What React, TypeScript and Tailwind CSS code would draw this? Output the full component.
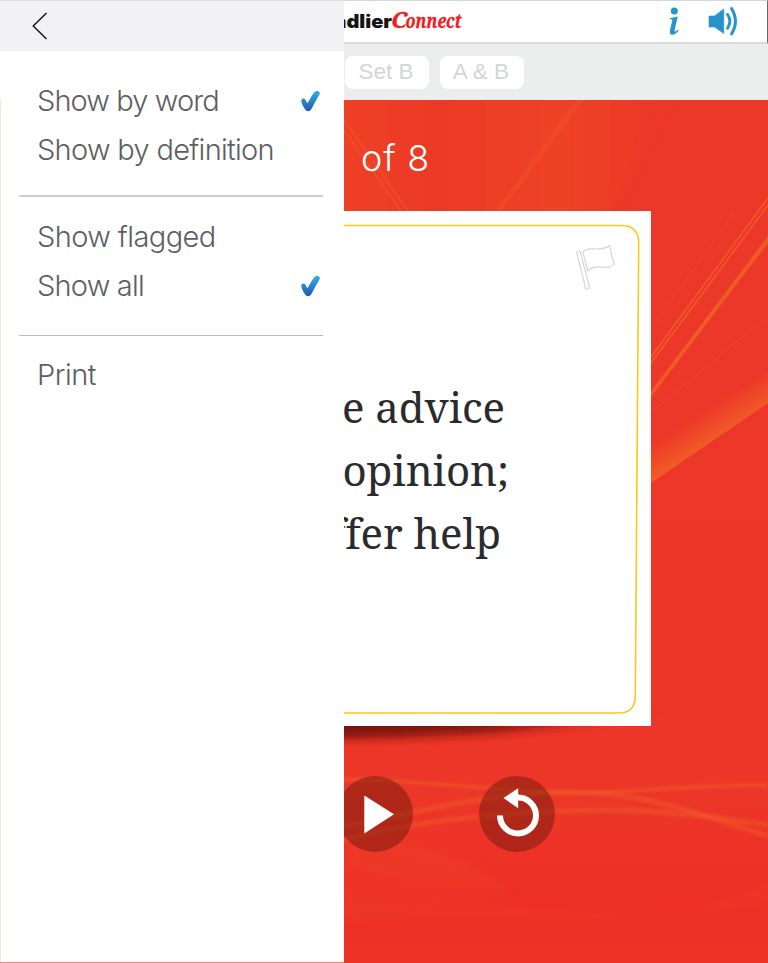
import React from "react";

function CheckMark() {
  return (
    <svg width="21" height="23" viewBox="0 0 21 23">
      <defs>
        <linearGradient id="check" x1="0" y1="0" x2="0" y2="1">
          <stop offset="0" stopColor="#2bb0e6" />
          <stop offset="0.5" stopColor="#2b86cc" />
          <stop offset="1" stopColor="#2356ae" />
        </linearGradient>
      </defs>
      <path
        d="M1.3 11.2C1 9.3 2.3 8.3 3.8 8.5C5.2 8.7 5.9 11 7.4 13.2C9.5 9.8 12 5 14.6 1.9C16.2.4 19 .9 19.8 2.6C20.2 3.7 19.2 5 18 6.9C15.5 11.1 13.4 15.5 11.2 19.2C9.9 21.7 6.8 21.8 5.4 19.8C3.6 17.3 1.9 14.2 1.3 11.2Z"
        fill="url(#check)"
      />
    </svg>
  );
}

function MenuRow({ label, checked, tracking }: { label: string; checked?: boolean; tracking: string }) {
  return (
    <div className="flex h-[49px] items-center justify-between pl-[37px] pr-[23px]">
      <span className={`whitespace-nowrap pb-px text-[29px] leading-[48px] ${tracking}`}>{label}</span>
      {checked && (
        <div className="pb-px">
          <CheckMark />
        </div>
      )}
    </div>
  );
}

function SidePanel() {
  return (
    <aside className="flex w-[344px] shrink-0 flex-col border-b border-[#f58a72] bg-white font-['Inter',sans-serif] font-light text-[#5e5e62]">
      <div className="flex h-[51px] shrink-0 items-center border-t border-[#dedee0] bg-[#f2f2f4] pl-8">
        <svg width="16" height="28" viewBox="0 0 16 28" fill="none" stroke="#111" strokeWidth="1.4">
          <path d="M14.5 1L1.2 14L14.5 27" />
        </svg>
      </div>
      <div className="h-[49px] shrink-0 pt-[26px]">
        <MenuRow label="Show by word" checked tracking="tracking-[-0.9px]" />
      </div>
      <div className="flex-1 border-l border-[#fbe3d9] pt-[26px]">
        <div className="-ml-px">
          <MenuRow label="Show by definition" tracking="tracking-[-0.7px]" />
          <div className="ml-[19px] mr-[21px] mt-[20px] h-[2px] bg-[#cfcfd1]" />
          <div className="pt-[16px]">
            <MenuRow label="Show flagged" tracking="tracking-[-0.6px]" />
            <MenuRow label="Show all" checked tracking="tracking-[-0.8px]" />
          </div>
          <div className="ml-[19px] mr-[21px] mt-[24px] h-px bg-[#bdbdbf]" />
          <div className="pt-[15px]">
            <MenuRow label="Print" tracking="tracking-[-0.5px]" />
          </div>
        </div>
      </div>
    </aside>
  );
}

function Header() {
  return (
    <header className="flex h-[44px] shrink-0 items-start border-b-2 border-t border-b-[#d9dadb] border-t-[#d5d6d8] border-r border-r-[#66686b] bg-white">
      <svg width="118" height="40" viewBox="344 1 118 40" className="shrink-0">
        <text x="334.5" y="28" textLength="57.5" lengthAdjust="spacingAndGlyphs" fontFamily="Inter, sans-serif" fontWeight="900" fontSize="18.5" fill="#151515">
          adlier
        </text>
        <g fontFamily="'Noto Serif', serif" fontWeight="700" fill="#ee1c23" stroke="#ee1c23" strokeWidth=".3">
          <text x="391" y="28" textLength="16" lengthAdjust="spacingAndGlyphs" fontStyle="italic" fontSize="21.5">
            C
          </text>
          <text x="405.5" y="28" textLength="56" lengthAdjust="spacingAndGlyphs" fontStyle="italic" fontSize="19">
            onnect
          </text>
        </g>
      </svg>
      <svg className="ml-[205px] mt-[5px]" width="16" height="32" viewBox="667 6 16 32">
        <circle cx="674.3" cy="11" r="3.5" fill="#2793cc" />
        <path d="M669.8 18.2L677.8 16.4L674.6 30.3C674.2 32.1 675.3 32 678 29.4L678.6 30.2C675.6 35.4 668.6 37 670 30.3L672.3 20.6C672.6 19.3 671.6 19.2 669.6 19.3Z" fill="#2793cc" />
      </svg>
      <svg className="ml-[25px] mt-[5px]" width="32" height="32" viewBox="708 6 32 32">
        <path d="M709 16H714.5L723.8 9V33.5L714.5 27H709Z" fill="#2793cc" stroke="#2793cc" strokeWidth=".6" strokeLinejoin="round" />
        <path d="M727.6 14.5Q732.2 21.3 727.6 28.3M731.6 8.5Q739.4 21.3 731.6 34" fill="none" stroke="#2793cc" strokeWidth="2.9" strokeLinecap="round" />
      </svg>
    </header>
  );
}

function SetTab({ label }: { label: string }) {
  return (
    <div className="flex h-[33px] w-[84px] items-center justify-center whitespace-pre rounded-[8px] bg-white pr-[2px] font-['Liberation_Sans',Arial,sans-serif] text-[22.5px] text-[#d3d5d7]">
      {label}
    </div>
  );
}

function Backdrop() {
  return (
    <svg className="absolute inset-0" width="424" height="863" viewBox="344 100 424 863">
      <defs>
        <linearGradient id="base" x1="0" y1="0" x2="0" y2="1">
          <stop offset="0" stopColor="#ec3828" />
          <stop offset="0.8" stopColor="#ec3728" />
          <stop offset="0.92" stopColor="#ed2f27" />
          <stop offset="1" stopColor="#ee3226" />
        </linearGradient>
        <linearGradient id="glow" x1="0" y1="0" x2="1" y2="0">
          <stop offset="0" stopColor="#f04426" />
          <stop offset="0.3" stopColor="#ed3a27" />
          <stop offset="0.65" stopColor="#ef4527" />
          <stop offset="1" stopColor="#eb3627" />
        </linearGradient>
        <linearGradient id="ray" gradientUnits="userSpaceOnUse" x1="696" y1="416" x2="712" y2="441">
          <stop offset="0" stopColor="#f15a27" stopOpacity="0" />
          <stop offset="1" stopColor="#f15a27" />
        </linearGradient>
        <linearGradient id="shade" gradientUnits="userSpaceOnUse" x1="344" y1="0" x2="651" y2="0">
          <stop offset="0" stopColor="#7a1207" />
          <stop offset="0.5" stopColor="#8c1509" />
          <stop offset="1" stopColor="#c9261a" stopOpacity="0.3" />
        </linearGradient>
        <filter id="soft" x="-20%" y="-50%" width="140%" height="200%">
          <feGaussianBlur stdDeviation="5" />
        </filter>
        <filter id="haze" x="-20%" y="-50%" width="140%" height="200%">
          <feGaussianBlur stdDeviation="1.8" />
        </filter>
      </defs>
      <rect x="344" y="100" width="424" height="863" fill="url(#base)" />
      <path d="M330 80H680L605 225H330Z" fill="url(#glow)" opacity=".8" filter="url(#soft)" />
      <path d="M344 120L408 211M344 130L401 211M582 100L500 211M578 100L497 211" stroke="#f2652a" strokeWidth="1.5" opacity=".4" />
      <path d="M768 198L651 357M768 205L651 363" stroke="#f2622a" strokeWidth="1.4" opacity=".85" />
      <path d="M768 236L651 391V397L768 243Z" fill="#f15a27" />
      <path d="M768 316L651 412M735 211L651 330" stroke="#f15a27" strokeWidth="1" opacity=".35" />
      <path d="M768 365L651 440V483L768 403Z" fill="url(#ray)" />
      <g fill="none" stroke="#f2652a" filter="url(#haze)">
        <path d="M344 779C440 782 520 793 580 793C650 791 700 785 768 785" strokeWidth="3" opacity=".55" />
        <path d="M344 826C430 810 470 796 560 792C650 792 690 812 768 836" strokeWidth="5" opacity=".4" />
        <path d="M344 840C450 811 610 805 680 814C715 815 740 822 768 825" strokeWidth="5" opacity=".4" />
      </g>
      <path d="M344 842Q455 833 508 895Q440 900 344 870ZM344 875Q560 935 768 902V880Q700 920 580 918Q430 910 344 920Z" fill="#ef4928" opacity=".25" filter="url(#soft)" />
      <path d="M325 710H665Q550 737 325 739Z" fill="url(#shade)" filter="url(#soft)" />
    </svg>
  );
}

function Card() {
  return (
    <section className="relative h-[515px] w-[307px] bg-white">
      <svg className="absolute inset-0" width="307" height="515" viewBox="344 211 307 515" fill="none">
        <path d="M340 225.5H622Q638.7 226 638.7 243L635.3 696Q635 713 619 713H340" stroke="#fcc71f" strokeWidth="1.6" />
        <path d="M576.8 252.5Q577.8 249.8 580.3 252L589.3 286.5Q589 290 585.7 289ZM583 252.2C588 245 602 253 609.5 245.5C611 253 612.5 259 614.4 264C608 272 596 262 587.7 270.8Z" stroke="#d5d6d7" strokeWidth="1.2" strokeLinejoin="round" />
      </svg>
      <div className="flex flex-col pt-[164px] font-['Noto_Serif','DejaVu_Serif',serif] text-[42px] leading-[63px] text-[#2b2b2e]">
        <div className="flex w-[161px] justify-end whitespace-nowrap tracking-[-0.1px]">e advice</div>
        <div className="flex w-[165px] justify-end whitespace-nowrap tracking-[-0.1px]">opinion;</div>
        <div className="flex w-[157px] justify-end whitespace-nowrap tracking-[-0.1px]">ffer help</div>
      </div>
    </section>
  );
}

export default function App() {
  return (
    <div className="flex h-[963px] w-[768px] overflow-hidden bg-white">
      <SidePanel />
      <main className="flex w-[424px] flex-col overflow-hidden">
        <Header />
        <nav className="flex h-[56px] shrink-0 items-center gap-[11px] bg-[#eceeee] pl-[1px]">
          <SetTab label="Set B" />
          <SetTab label="A & B" />
        </nav>
        <div className="relative h-[863px]">
          <Backdrop />
          <div className="relative flex h-full flex-col">
            <div className="h-[111px] pl-[17px] font-['Inter',sans-serif] text-[36px] font-light leading-[116px] tracking-[0.8px] text-white">
              of 8
            </div>
            <Card />
            <div className="flex pt-[50px]">
              <div className="-ml-[7px] flex size-[76px] items-center justify-center rounded-full bg-[#651608]/45">
                <svg width="76" height="76" viewBox="0 0 76 76">
                  <path d="M27.3 19.5L57 38.3L27.3 57.5Z" fill="#fff" />
                </svg>
              </div>
              <div className="ml-[66px] size-[76px] rounded-full bg-[#651608]/45">
                <svg width="76" height="76" viewBox="479 776 76 76">
                  <path d="M500 815.5A18 18 0 1 0 518 797.5" fill="none" stroke="#fff" strokeWidth="6" />
                  <path d="M503.5 798L518.2 788.3V808.3Z" fill="#fff" />
                </svg>
              </div>
            </div>
          </div>
        </div>
      </main>
    </div>
  );
}
